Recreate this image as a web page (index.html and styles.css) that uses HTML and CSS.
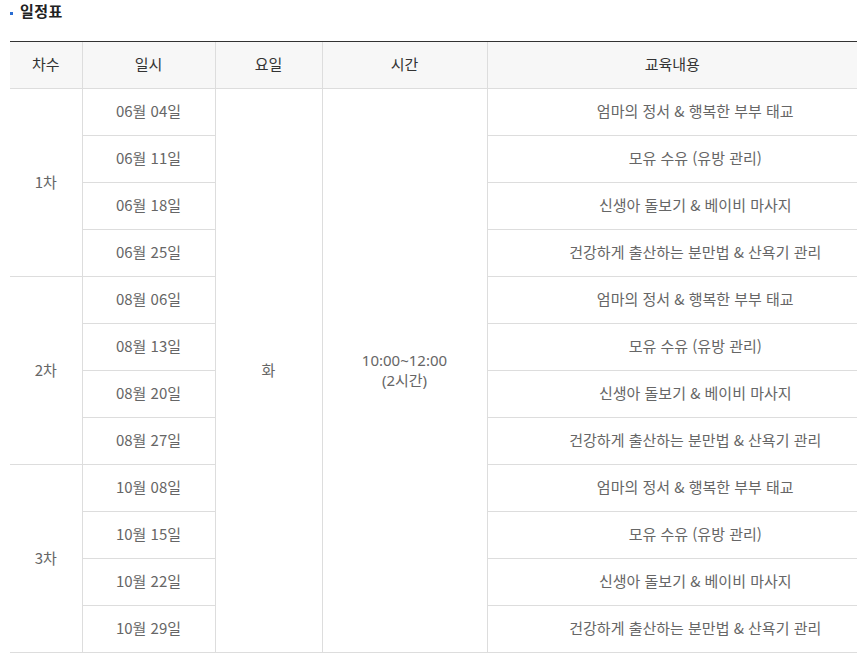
FILE: index.html
```html
<!DOCTYPE html>
<html lang="ko">
<head>
<meta charset="utf-8">
<title>일정표</title>
<link rel="stylesheet" href="styles.css">
</head>
<body>
<h3 class="title"><span class="bullet"></span>일정표</h3>
<table class="schedule">
  <colgroup>
    <col class="c1"><col class="c2"><col class="c3"><col class="c4"><col class="c5">
  </colgroup>
  <thead>
    <tr><th>차수</th><th>일시</th><th>요일</th><th>시간</th><th class="last">교육내용</th></tr>
  </thead>
  <tbody>
    <tr><td rowspan="4" class="first">1차</td><td>06월 04일</td><td rowspan="12">화</td><td rowspan="12" class="time">10:00~12:00<br>(2시간)</td><td class="last">엄마의 정서 &amp; 행복한 부부 태교</td></tr>
    <tr><td>06월 11일</td><td class="last">모유 수유 (유방 관리)</td></tr>
    <tr><td>06월 18일</td><td class="last">신생아 돌보기 &amp; 베이비 마사지</td></tr>
    <tr><td>06월 25일</td><td class="last">건강하게 출산하는 분만법 &amp; 산욕기 관리</td></tr>
    <tr><td rowspan="4" class="first">2차</td><td>08월 06일</td><td class="last">엄마의 정서 &amp; 행복한 부부 태교</td></tr>
    <tr><td>08월 13일</td><td class="last">모유 수유 (유방 관리)</td></tr>
    <tr><td>08월 20일</td><td class="last">신생아 돌보기 &amp; 베이비 마사지</td></tr>
    <tr><td>08월 27일</td><td class="last">건강하게 출산하는 분만법 &amp; 산욕기 관리</td></tr>
    <tr><td rowspan="4" class="first">3차</td><td>10월 08일</td><td class="last">엄마의 정서 &amp; 행복한 부부 태교</td></tr>
    <tr><td>10월 15일</td><td class="last">모유 수유 (유방 관리)</td></tr>
    <tr><td>10월 22일</td><td class="last">신생아 돌보기 &amp; 베이비 마사지</td></tr>
    <tr><td>10월 29일</td><td class="last">건강하게 출산하는 분만법 &amp; 산욕기 관리</td></tr>
  </tbody>
</table>
</body>
</html>
```
FILE: styles.css
```css
html, body {
  margin: 0;
  padding: 0;
  background: #fff;
}
body {
  font-family: "Noto Sans CJK KR", "Noto Sans", sans-serif;
  padding: 0 0 0 10px;
}
.title {
  margin: 0;
  height: 41px;
  display: flex;
  align-items: flex-start;
  padding-top: 1px;
  box-sizing: border-box;
  font-size: 15px;
  line-height: 20px;
  font-weight: 700;
  color: #222;
  letter-spacing: 0.5px;
}
.bullet {
  width: 3px;
  height: 3px;
  background: #2a6dd2;
  margin: 11px 7px 0 0;
  flex: none;
}
.schedule {
  width: 847px;
  border-collapse: collapse;
  table-layout: fixed;
  font-size: 15px;
  color: #666;
}
.c1 { width: 72px; }
.c2 { width: 133px; }
.c3 { width: 107px; }
.c4 { width: 165px; }
.c5 { width: 370px; }
.schedule th {
  background: #f7f7f7;
  color: #333;
  font-weight: 400;
  height: 43px;
  padding: 0 0 3px;
  border-top: 1px solid #333;
  border-bottom: 1px solid #ddd;
  border-left: 1px solid #ddd;
  text-align: center;
  vertical-align: middle;
}
.schedule th:first-child { border-left: 0; }
.schedule td {
  height: 43px;
  padding: 0 0 3px;
  border: 1px solid #ddd;
  text-align: center;
  vertical-align: middle;
  line-height: 17px;
}
.schedule td.first { border-left: 0; }
.schedule .last { border-right: 0; }
.schedule td.last { padding-left: 46px; }
.schedule td.time {
  font-family: "Noto Sans", "Noto Sans CJK KR", sans-serif;
  line-height: 20px;
  padding-bottom: 2px;
}
```
